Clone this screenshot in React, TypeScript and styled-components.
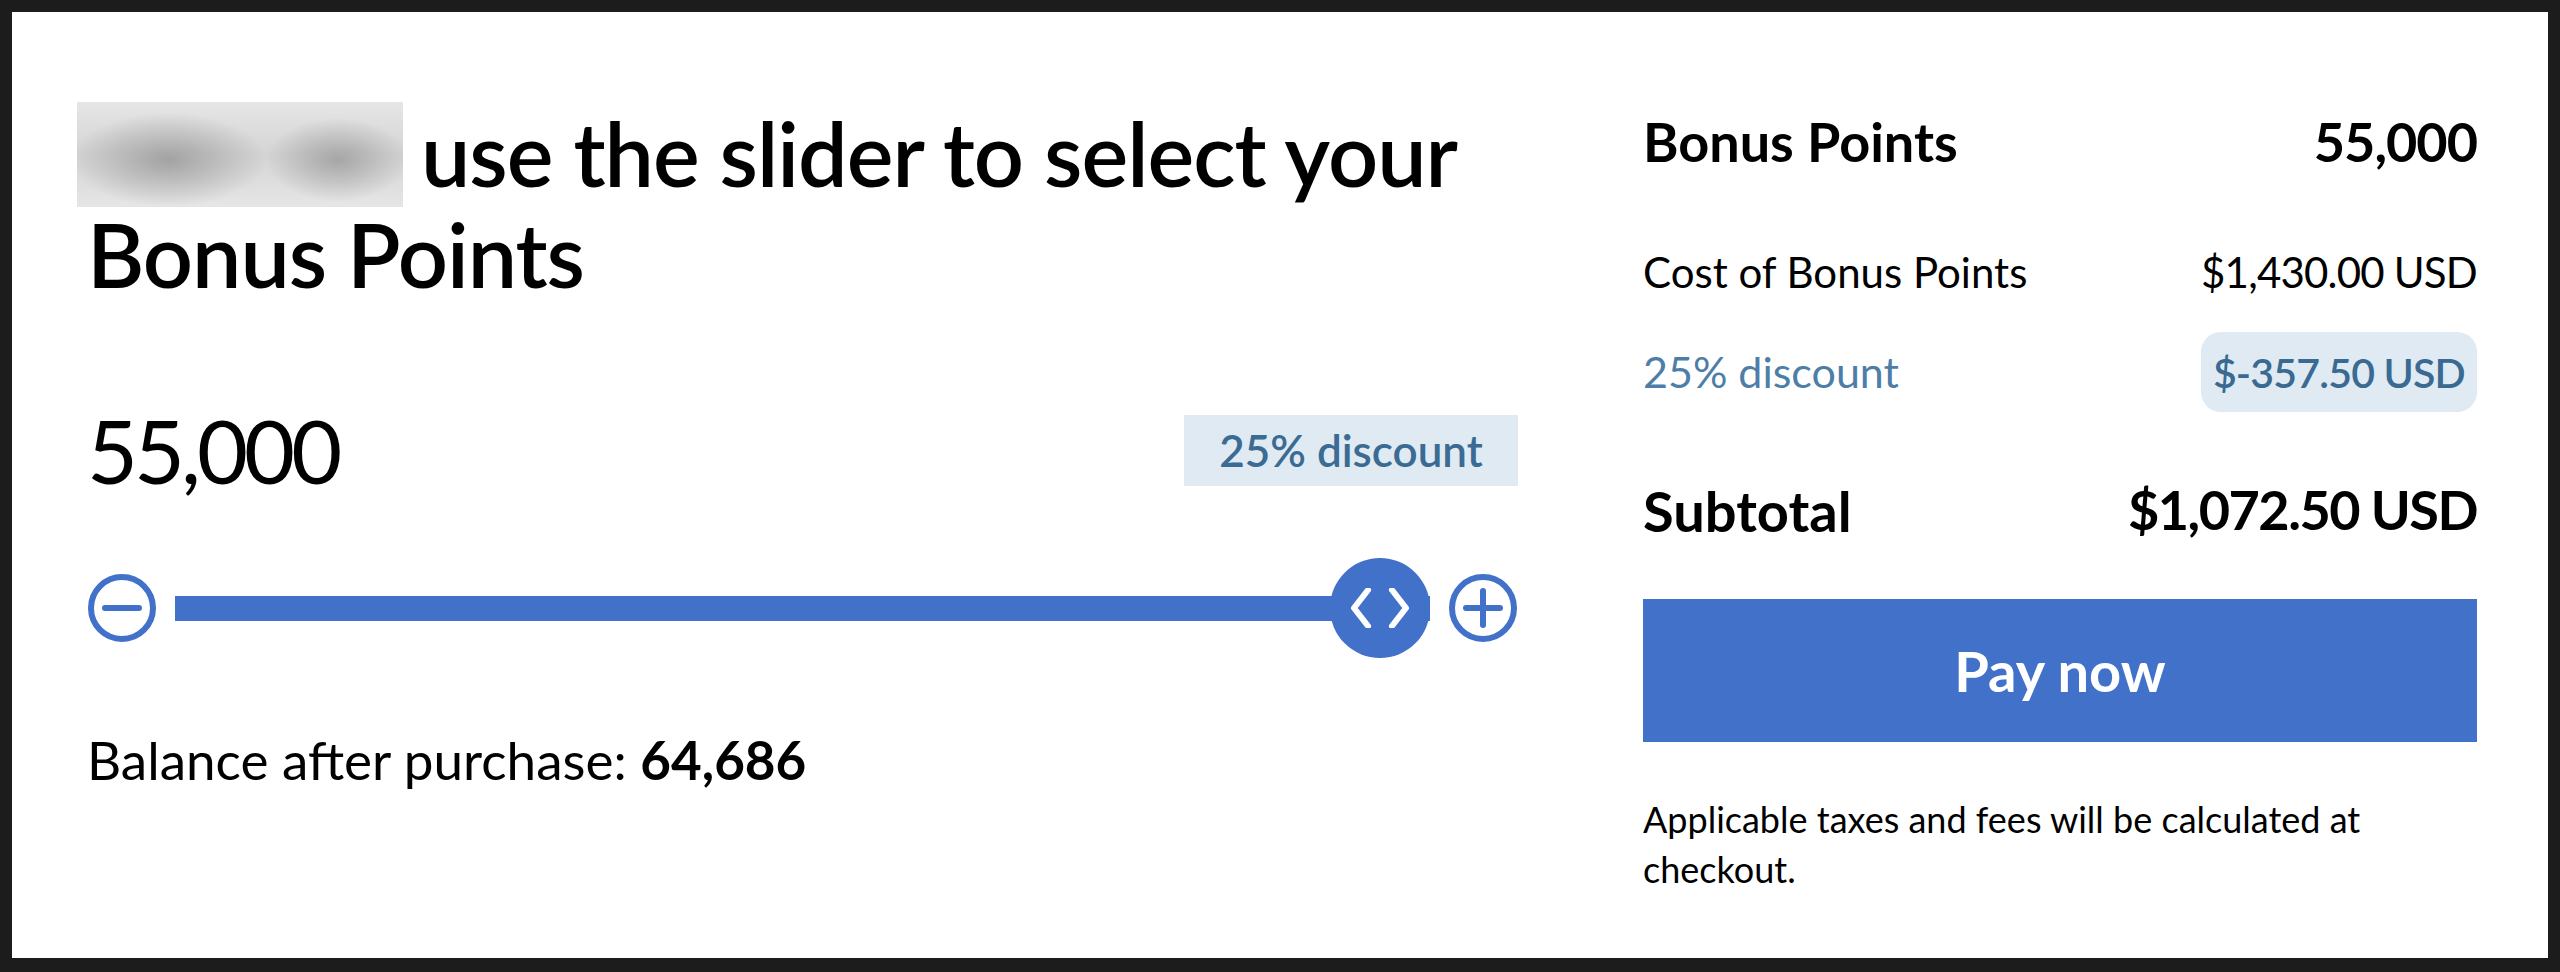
import { createGlobalStyle, styled } from "styled-components";

const GlobalStyle = createGlobalStyle`
  html, body {
    margin: 0;
    padding: 0;
    background: #1c1c1c;
  }
  body {
    font-family: "Lato", "Noto Sans", sans-serif;
    color: #000;
  }
  * {
    box-sizing: border-box;
  }
`;

const BLUE = "#4271c9";

const Card = styled.div`
  margin: 12px;
  height: 946px;
  background: #fff;
  display: grid;
  grid-template-columns: 1431px 834px;
  column-gap: 125px;
  padding: 90px 71px 0 75px;
`;

const LeftCol = styled.section`
  display: flex;
  flex-direction: column;
`;

const Heading = styled.h1`
  margin: 0;
  font-size: 88px;
  line-height: 95px;
  font-weight: 600;
  letter-spacing: -1px;
`;

const Redacted = styled.span`
  display: inline-block;
  width: 326px;
  height: 105px;
  margin: 0 18px 0 -10px;
  vertical-align: -20px;
  background:
    radial-gradient(ellipse 30% 45% at 28% 55%, rgba(150, 150, 150, 0.8), transparent),
    radial-gradient(ellipse 22% 40% at 80% 55%, rgba(150, 150, 150, 0.75), transparent),
    linear-gradient(#e6e6e6, #d4d4d4 50%, #e6e6e6);
`;

const AmountRow = styled.div`
  margin-top: 104px;
  display: flex;
  align-items: center;
  justify-content: space-between;
`;

const Amount = styled.div`
  font-size: 88px;
  line-height: 88px;
  font-weight: 400;
  letter-spacing: -4px;
`;

const DiscountBadge = styled.div`
  width: 334px;
  height: 71px;
  display: flex;
  align-items: center;
  justify-content: center;
  background: #dfeaf2;
  color: #3b6b93;
  font-size: 44px;
  font-weight: 600;
`;

const SliderRow = styled.div`
  margin-top: 64px;
  height: 100px;
  display: flex;
  align-items: center;
  gap: 18px;
`;

const StepButton = styled.button`
  width: 70px;
  height: 70px;
  padding: 0;
  border: none;
  background: none;
  display: flex;
  flex-shrink: 0;
  cursor: pointer;
`;

const Track = styled.div`
  position: relative;
  flex: 1;
  height: 25px;
  background: ${BLUE};
`;

const Thumb = styled.div`
  position: absolute;
  top: 50%;
  width: 100px;
  height: 100px;
  margin-top: -50px;
  border-radius: 50%;
  background: ${BLUE};
  display: flex;
  align-items: center;
  justify-content: center;
`;

const Balance = styled.p`
  margin: 69px 0 0;
  font-size: 53px;
  line-height: 65px;
`;

const RightCol = styled.section`
  display: flex;
  flex-direction: column;
  padding-top: 8px;
`;

const Row = styled.div<{ $gap: number }>`
  margin-top: ${(p) => p.$gap}px;
  display: flex;
  align-items: center;
  justify-content: space-between;
`;

const Label = styled.span<{ $size: number; $weight?: number; $color?: string; $tight?: number }>`
  font-size: ${(p) => p.$size}px;
  font-weight: ${(p) => p.$weight ?? 400};
  color: ${(p) => p.$color ?? "#000"};
  letter-spacing: ${(p) => p.$tight ?? 0}px;
  line-height: 1.2;
`;

const Pill = styled.span`
  height: 80px;
  padding: 0 12px;
  display: flex;
  align-items: center;
  border-radius: 20px;
  background: #dfeaf2;
  color: #3a6a92;
  font-size: 41px;
  font-weight: 600;
  letter-spacing: -0.8px;
`;

const PayButton = styled.button`
  margin-top: 55px;
  height: 143px;
  width: 100%;
  border: none;
  background: ${BLUE};
  color: #fff;
  font-family: inherit;
  font-size: 56px;
  font-weight: 700;
  cursor: pointer;
`;

const Note = styled.p`
  margin: 52px 0 0;
  font-size: 36px;
  line-height: 50px;
`;

function CircleIcon({ plus }: { plus?: boolean }) {
  return (
    <svg width="70" height="70" viewBox="0 0 70 70" fill="none">
      <circle cx="35" cy="35" r="31" stroke={BLUE} strokeWidth="6" />
      <line x1="18" y1="35" x2="52" y2="35" stroke={BLUE} strokeWidth="6" strokeLinecap="round" />
      {plus && <line x1="35" y1="18" x2="35" y2="52" stroke={BLUE} strokeWidth="6" strokeLinecap="round" />}
    </svg>
  );
}

function Chevrons() {
  return (
    <svg width="60" height="40" viewBox="0 0 60 40" fill="none">
      <polyline points="18,2 4,20 18,38" stroke="#fff" strokeWidth="6" strokeLinecap="round" strokeLinejoin="round" />
      <polyline points="42,2 56,20 42,38" stroke="#fff" strokeWidth="6" strokeLinecap="round" strokeLinejoin="round" />
    </svg>
  );
}

export default function App() {
  const points = 55000;
  const min = 0;
  const max = 55000;
  const pct = ((points - min) / (max - min)) * 100;

  return (
    <>
      <GlobalStyle />
      <Card>
        <LeftCol>
          <Heading>
            <Redacted />
            use the slider to select your
            <br />
            Bonus Points
          </Heading>
          <AmountRow>
            <Amount>55,000</Amount>
            <DiscountBadge>25% discount</DiscountBadge>
          </AmountRow>
          <SliderRow>
            <StepButton aria-label="Decrease">
              <CircleIcon />
            </StepButton>
            <Track>
              <Thumb style={{ left: `calc(${pct}% - 100px)` }}>
                <Chevrons />
              </Thumb>
            </Track>
            <StepButton aria-label="Increase">
              <CircleIcon plus />
            </StepButton>
          </SliderRow>
          <Balance>
            Balance after purchase: <b>64,686</b>
          </Balance>
        </LeftCol>
        <RightCol>
          <Row $gap={0}>
            <Label $size={54} $weight={700}>Bonus Points</Label>
            <Label $size={54} $weight={700} $tight={-1}>55,000</Label>
          </Row>
          <Row $gap={72}>
            <Label $size={42}>Cost of Bonus Points</Label>
            <Label $size={42} $tight={-0.8}>$1,430.00 USD</Label>
          </Row>
          <Row $gap={35}>
            <Label $size={43} $color="#4d7ea8">25% discount</Label>
            <Pill>$-357.50 USD</Pill>
          </Row>
          <Row $gap={65}>
            <Label $size={56} $weight={700}>Subtotal</Label>
            <Label $size={54} $weight={700} $tight={-1.5}>$1,072.50 USD</Label>
          </Row>
          <PayButton>Pay now</PayButton>
          <Note>Applicable taxes and fees will be calculated at checkout.</Note>
        </RightCol>
      </Card>
    </>
  );
}
